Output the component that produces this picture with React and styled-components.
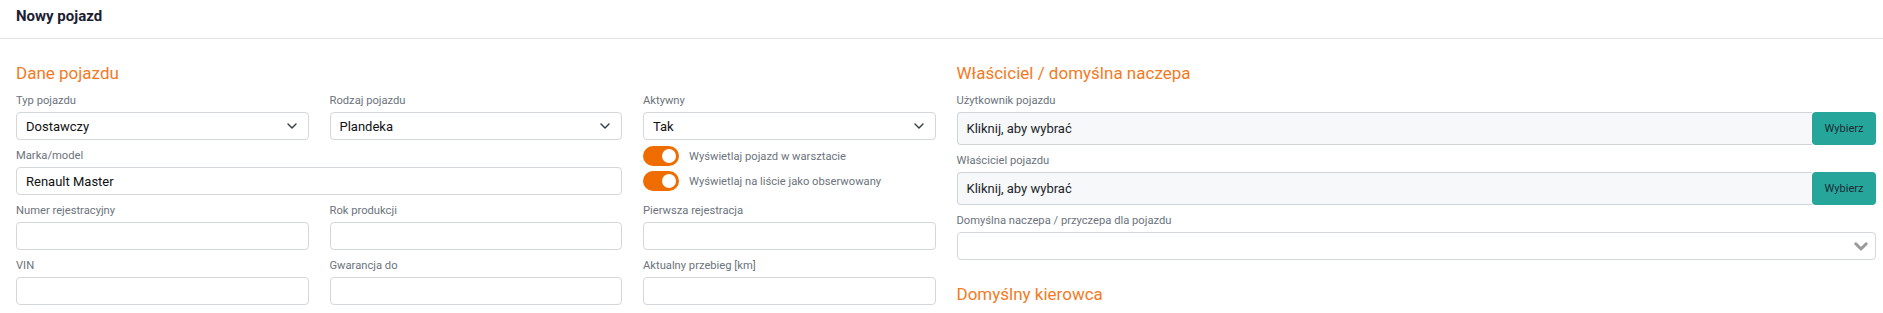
import React from 'react';
import styled, { createGlobalStyle } from 'styled-components';

const Global = createGlobalStyle`
  html, body { margin: 0; padding: 0; background: #fff; }
  body { font-family: Roboto, "Liberation Sans", Arial, sans-serif; }
  *, *::before, *::after { box-sizing: border-box; }
`;

const Page = styled.div`
  width: 1883px;
  height: 313px;
  overflow: hidden;
  background: #fff;
`;

const TopBar = styled.header`
  height: 39px;
  border-bottom: 1px solid #e2e4e8;
  padding: 7px 16px 0;
`;

const Title = styled.h1`
  margin: 0;
  font-size: 15px;
  line-height: 18px;
  font-weight: 700;
  color: #1b2131;
`;

const Body = styled.main`
  display: grid;
  grid-template-columns: 1fr 1fr;
  column-gap: 21px;
  padding: 24px 7px 0 16px;
`;

const Section = styled.section`
  display: flex;
  flex-direction: column;
`;

const SectionTitle = styled.h2`
  margin: ${p => (p.$spaced ? '24px 0 10px' : '0 0 10px')};
  font-size: 17px;
  line-height: 20px;
  font-weight: 400;
  color: #f47a1f;
`;

const FormGrid = styled.div`
  display: grid;
  grid-template-columns: repeat(3, 1fr);
  column-gap: 21px;
  row-gap: 8px;
`;

const Stack = styled.div`
  display: flex;
  flex-direction: column;
  gap: 8px;
`;

const Field = styled.div`
  display: flex;
  flex-direction: column;
  grid-column: span ${p => p.$span || 1};
  min-width: 0;
`;

const Label = styled.label`
  font-size: 11.2px;
  line-height: 16px;
  color: #6c737c;
  margin-bottom: 3px;
  white-space: nowrap;
`;

const TextInput = styled.input`
  height: 28px;
  width: 100%;
  border: 1px solid #d3d6db;
  border-radius: 4px;
  background: #fff;
  padding: 0 9px;
  font-family: inherit;
  font-size: 13px;
  color: #111;
  outline: none;
`;

const SelectBox = styled.div`
  height: 28px;
  border: 1px solid #d3d6db;
  border-radius: 4px;
  background: #fff;
  display: flex;
  align-items: center;
  justify-content: space-between;
  padding: 0 ${p => (p.$heavy ? '7px' : '11px')} 0 9px;
  font-size: 13px;
  color: #111;
`;

const PickerRow = styled.div`
  display: flex;
  height: 33px;
`;

const PickerValue = styled.div`
  flex: 1;
  display: flex;
  align-items: center;
  padding: 0 9px;
  background: #f7f8fa;
  border: 1px solid #d0d4da;
  border-right: none;
  border-radius: 4px 0 0 4px;
  font-size: 13px;
  color: #212529;
`;

const PickButton = styled.button`
  width: 64px;
  height: 33px;
  border: none;
  border-radius: 4px;
  background: #26a69a;
  color: #1d2b36;
  font-family: inherit;
  font-size: 11px;
  padding: 0;
  cursor: pointer;
`;

const ToggleList = styled.div`
  display: flex;
  flex-direction: column;
  gap: 5px;
  margin-top: -2px;
`;

const ToggleRow = styled.div`
  display: flex;
  align-items: center;
  gap: 10px;
  font-size: 11.2px;
  color: #6c737c;
`;

const Track = styled.span`
  position: relative;
  width: 36px;
  height: 20px;
  border-radius: 10px;
  background: ${p => (p.$on ? '#ef6c00' : '#ccc')};
  flex: none;
`;

const Knob = styled.span`
  position: absolute;
  top: 3px;
  left: ${p => (p.$on ? '19px' : '3px')};
  width: 14px;
  height: 14px;
  border-radius: 50%;
  background: #fff;
`;

const Chevron = ({ heavy }) =>
  heavy ? (
    <svg width="14" height="9" viewBox="0 0 14 9">
      <path d="M1.8 1.8 L7 7 L12.2 1.8" fill="none" stroke="#9a9a9a" strokeWidth="3" strokeLinecap="round" strokeLinejoin="round" />
    </svg>
  ) : (
    <svg width="10" height="6" viewBox="0 0 10 6">
      <path d="M1 1 L5 5 L9 1" fill="none" stroke="#343a40" strokeWidth="1.4" strokeLinecap="round" strokeLinejoin="round" />
    </svg>
  );

const Select = ({ value, heavy }) => (
  <SelectBox $heavy={heavy}>
    <span>{value}</span>
    <Chevron heavy={heavy} />
  </SelectBox>
);

const Toggle = ({ on, children }) => (
  <ToggleRow>
    <Track $on={on}>
      <Knob $on={on} />
    </Track>
    <span>{children}</span>
  </ToggleRow>
);

export default function App() {
  return (
    <Page>
      <Global />
      <TopBar>
        <Title>Nowy pojazd</Title>
      </TopBar>
      <Body>
        <Section>
          <SectionTitle>Dane pojazdu</SectionTitle>
          <FormGrid>
            <Field>
              <Label>Typ pojazdu</Label>
              <Select value="Dostawczy" />
            </Field>
            <Field>
              <Label>Rodzaj pojazdu</Label>
              <Select value="Plandeka" />
            </Field>
            <Field>
              <Label>Aktywny</Label>
              <Select value="Tak" />
            </Field>
            <Field $span={2}>
              <Label>Marka/model</Label>
              <TextInput readOnly value="Renault Master" />
            </Field>
            <ToggleList>
              <Toggle on>Wyświetlaj pojazd w warsztacie</Toggle>
              <Toggle on>Wyświetlaj na liście jako obserwowany</Toggle>
            </ToggleList>
            <Field>
              <Label>Numer rejestracyjny</Label>
              <TextInput readOnly value="" />
            </Field>
            <Field>
              <Label>Rok produkcji</Label>
              <TextInput readOnly value="" />
            </Field>
            <Field>
              <Label>Pierwsza rejestracja</Label>
              <TextInput readOnly value="" />
            </Field>
            <Field>
              <Label>VIN</Label>
              <TextInput readOnly value="" />
            </Field>
            <Field>
              <Label>Gwarancja do</Label>
              <TextInput readOnly value="" />
            </Field>
            <Field>
              <Label>Aktualny przebieg [km]</Label>
              <TextInput readOnly value="" />
            </Field>
          </FormGrid>
        </Section>
        <Section>
          <SectionTitle>Właściciel / domyślna naczepa</SectionTitle>
          <Stack>
            <Field>
              <Label>Użytkownik pojazdu</Label>
              <PickerRow>
                <PickerValue>Kliknij, aby wybrać</PickerValue>
                <PickButton>Wybierz</PickButton>
              </PickerRow>
            </Field>
            <Field>
              <Label>Właściciel pojazdu</Label>
              <PickerRow>
                <PickerValue>Kliknij, aby wybrać</PickerValue>
                <PickButton>Wybierz</PickButton>
              </PickerRow>
            </Field>
            <Field>
              <Label>Domyślna naczepa / przyczepa dla pojazdu</Label>
              <Select value="" heavy />
            </Field>
          </Stack>
          <SectionTitle $spaced>Domyślny kierowca</SectionTitle>
        </Section>
      </Body>
    </Page>
  );
}
